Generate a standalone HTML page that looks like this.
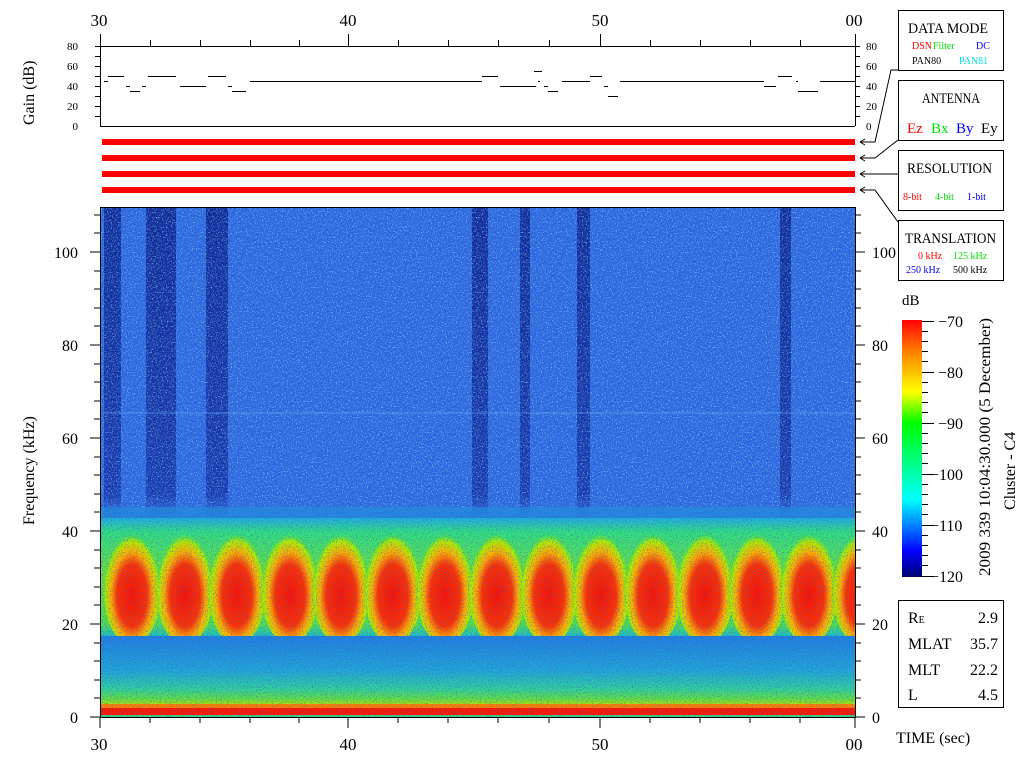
<!DOCTYPE html>
<html><head><meta charset="utf-8"><style>
html,body{margin:0;padding:0;background:#fff;}
svg{display:block;}
text{font-family:"Liberation Serif",serif;}
.m{font-family:"Liberation Mono",monospace;}
</style></head><body>
<svg width="1024" height="768" viewBox="0 0 1024 768" xmlns="http://www.w3.org/2000/svg">
<defs>
<radialGradient id="blob" cx="50%" cy="60%" r="50%">
<stop offset="0" stop-color="#ff1000"/>
<stop offset="0.5" stop-color="#ff3000"/>
<stop offset="0.7" stop-color="#ffb000"/>
<stop offset="0.88" stop-color="#b0f000"/>
<stop offset="1" stop-color="#40e040" stop-opacity="0"/>
</radialGradient>
<linearGradient id="band" x1="0" y1="0" x2="0" y2="1">
<stop offset="0" stop-color="#20b0e0"/>
<stop offset="0.12" stop-color="#30e080"/>
<stop offset="0.5" stop-color="#70e040"/>
<stop offset="0.9" stop-color="#50e050"/>
<stop offset="1" stop-color="#20c0c0"/>
</linearGradient>
<linearGradient id="low" x1="0" y1="0" x2="0" y2="1">
<stop offset="0" stop-color="#2080e0"/>
<stop offset="0.5" stop-color="#20a8d8"/>
<stop offset="0.75" stop-color="#30d0a0"/>
<stop offset="0.9" stop-color="#60e040"/>
<stop offset="1" stop-color="#c0e000"/>
</linearGradient>
<linearGradient id="stripe" x1="0" y1="0" x2="0" y2="1">
<stop offset="0" stop-color="#102898"/>
<stop offset="0.9" stop-color="#1838b0"/>
<stop offset="1" stop-color="#2858d0" stop-opacity="0"/>
</linearGradient>
<linearGradient id="cbar" x1="0" y1="1" x2="0" y2="0">
<stop offset="0" stop-color="#000070"/>
<stop offset="0.1" stop-color="#0000ff"/>
<stop offset="0.3" stop-color="#00ffff"/>
<stop offset="0.45" stop-color="#00ff80"/>
<stop offset="0.6" stop-color="#00ff00"/>
<stop offset="0.72" stop-color="#ffff00"/>
<stop offset="0.86" stop-color="#ff9000"/>
<stop offset="1" stop-color="#ff0000"/>
</linearGradient>
<filter id="noiseD" x="0" y="0" width="100%" height="100%">
<feTurbulence type="fractalNoise" baseFrequency="0.8" numOctaves="1" seed="3"/>
<feColorMatrix type="matrix" values="0 0 0 0 0.05  0 0 0 0 0.1  0 0 0 0 0.5  4 0 0 0 -2.0"/>
</filter>
<filter id="noiseL" x="0" y="0" width="100%" height="100%">
<feTurbulence type="fractalNoise" baseFrequency="0.8" numOctaves="1" seed="9"/>
<feColorMatrix type="matrix" values="0 0 0 0 0.2  0 0 0 0 0.8  0 0 0 0 1  0 4 0 0 -2.1"/>
</filter>
<clipPath id="plot"><rect x="101" y="208" width="754" height="509"/></clipPath>
</defs>

<g font-size="17" text-anchor="middle">
<text x="99" y="26">30</text><text x="348" y="26">40</text><text x="600" y="26">50</text><text x="854" y="26">00</text>
<text x="99" y="750">30</text><text x="348" y="750">40</text><text x="600" y="750">50</text><text x="854" y="750">00</text>
</g>

<g stroke="#000" stroke-width="1" fill="none">
<line x1="100" y1="46.5" x2="855" y2="46.5"/>
<line x1="100.5" y1="34" x2="100.5" y2="126"/>
<line x1="855.5" y1="34" x2="855.5" y2="126"/>
<line x1="100" y1="126.5" x2="855" y2="126.5"/>
<path d="M150.5 40V46M200.5 40V46M250.5 40V46M299.5 40V46M348.5 34V46M398.5 40V46M448.5 40V46M498.5 40V46M549.5 40V46M600.5 34V46M650.5 40V46M700.5 40V46M750.5 40V46M800.5 40V46"/>
<path d="M95 46.5H100M95 56.5H100M95 66.5H100M95 76.5H100M95 86.5H100M95 96.5H100M95 106.5H100M95 116.5H100"/>
<path d="M855 46.5H860M855 56.5H860M855 66.5H860M855 76.5H860M855 86.5H860M855 96.5H860M855 106.5H860M855 116.5H860"/>
<path d="M104 81.5H108M108 76.5H124M126 86.5H130M130 91.5H140M142 86.5H146M148 76.5H176M180 86.5H206M208 76.5H226M228 86.5H232M232 91.5H246M250 81.5H482M482 76.5H498M500 86.5H536M538 81.5H540M534 71.5H542M544 86.5H548M548 91.5H558M562 81.5H590M590 76.5H602M604 86.5H608M608 96.5H618M620 81.5H764M764 86.5H776M778 76.5H792M796 81.5H798M798 91.5H818M820 81.5H855"/>
</g>
<g font-size="11" class="m" fill="#000">
<text x="78" y="50" text-anchor="end">80</text><text x="78" y="70" text-anchor="end">60</text><text x="78" y="90" text-anchor="end">40</text><text x="78" y="110" text-anchor="end">20</text><text x="78" y="130" text-anchor="end">0</text>
<text x="866" y="50">80</text><text x="866" y="70">60</text><text x="866" y="90">40</text><text x="866" y="110">20</text><text x="866" y="130">0</text>
</g>
<text x="0" y="0" font-size="16" transform="translate(34,125) rotate(-90)">Gain (dB)</text>

<g fill="#ff0000">
<rect x="102" y="139" width="753" height="6"/>
<rect x="102" y="155" width="753" height="6"/>
<rect x="102" y="171" width="753" height="6"/>
<rect x="102" y="187" width="753" height="6"/>
</g>

<g stroke="#000" fill="none">
<path d="M898 70H891L875 142H860M860 142L865 139M860 142L865 145"/>
<path d="M898 140L875 158H860M860 158L865 155M860 158L865 161"/>
<path d="M898 174H860M860 174L865 171M860 174L865 177"/>
<path d="M898 222L875 190H860M860 190L865 187M860 190L865 193"/>
</g>

<g fill="#fff" stroke="#000">
<rect x="898.5" y="10.5" width="105" height="60"/>
<rect x="898.5" y="80.5" width="105" height="60"/>
<rect x="898.5" y="150.5" width="105" height="60"/>
<rect x="898.5" y="220.5" width="105" height="60"/>
</g>
<g font-size="15">
<text x="908" y="33" textLength="80" lengthAdjust="spacingAndGlyphs">DATA MODE</text>
<text x="922" y="103" textLength="58" lengthAdjust="spacingAndGlyphs">ANTENNA</text>
<text x="907" y="173" textLength="85" lengthAdjust="spacingAndGlyphs">RESOLUTION</text>
<text x="905" y="243" textLength="91" lengthAdjust="spacingAndGlyphs">TRANSLATION</text>
</g>
<g font-size="10" class="m">
<text x="912" y="49" fill="#ff0000">DSN</text><text x="933" y="49" fill="#00e000">Filter</text><text x="976" y="49" fill="#0000ff">DC</text>
<text x="912" y="64" fill="#000">PAN80</text><text x="959" y="64" fill="#00e0e0">PAN81</text>
<text x="903" y="200" fill="#ff0000">8-bit</text><text x="935" y="200" fill="#00e000">4-bit</text><text x="967" y="200" fill="#0000ff">1-bit</text>
<text x="918" y="259" fill="#ff0000">0 kHz</text><text x="953" y="259" fill="#00e000">125 kHz</text>
<text x="906" y="273" fill="#0000ff">250 kHz</text><text x="953" y="273" fill="#000">500 kHz</text>
</g>
<g font-size="15">
<text x="907" y="133" fill="#ff0000">Ez</text><text x="931" y="133" fill="#00e000">Bx</text><text x="956" y="133" fill="#0000ff">By</text><text x="981" y="133" fill="#000">Ey</text>
</g>

<g clip-path="url(#plot)">
<rect x="100" y="207" width="756" height="512" fill="#2d68e2"/>
<g fill="url(#stripe)">
<rect x="104" y="207" width="17" height="318"/>
<rect x="146" y="207" width="30" height="318"/>
<rect x="206" y="207" width="22" height="318"/>
<rect x="472" y="207" width="16" height="320"/>
<rect x="520" y="207" width="10" height="318"/>
<rect x="577" y="207" width="13" height="320"/>
<rect x="780" y="207" width="11" height="318"/>
</g>
<line x1="100" y1="413" x2="856" y2="413" stroke="#60b0f0" stroke-width="1" opacity="0.6"/>
<rect x="100" y="507" width="756" height="20" fill="#20a0e0" opacity="0.6"/>
<rect x="100" y="518" width="756" height="118" fill="url(#band)"/>
<g fill="url(#blob)">
<ellipse cx="132" cy="583" rx="30" ry="62"/>
<ellipse cx="185" cy="583" rx="30" ry="62"/>
<ellipse cx="237" cy="583" rx="30" ry="62"/>
<ellipse cx="290" cy="583" rx="30" ry="62"/>
<ellipse cx="341" cy="583" rx="30" ry="62"/>
<ellipse cx="393" cy="583" rx="30" ry="62"/>
<ellipse cx="445" cy="583" rx="30" ry="62"/>
<ellipse cx="497" cy="583" rx="30" ry="62"/>
<ellipse cx="549" cy="583" rx="30" ry="62"/>
<ellipse cx="601" cy="583" rx="30" ry="62"/>
<ellipse cx="653" cy="583" rx="30" ry="62"/>
<ellipse cx="705" cy="583" rx="30" ry="62"/>
<ellipse cx="757" cy="583" rx="30" ry="62"/>
<ellipse cx="809" cy="583" rx="30" ry="62"/>
<ellipse cx="861" cy="583" rx="30" ry="62"/>
</g>
<rect x="100" y="636" width="756" height="70" fill="url(#low)"/>
<rect x="100" y="704" width="756" height="5" fill="#ff8000"/>
<rect x="100" y="708" width="756" height="8" fill="#ff1800"/>
<rect x="100" y="715" width="756" height="3" fill="#40d080"/>
<rect x="100" y="207" width="756" height="300" filter="url(#noiseL)" opacity="0.8"/>
<rect x="100" y="207" width="756" height="512" filter="url(#noiseD)" opacity="0.6"/>
</g>
<rect x="100.5" y="207.5" width="755" height="510" fill="none" stroke="#000"/>

<g stroke="#000" fill="none">
<path d="M90 717H100M94 698H100M94 680H100M94 661H100M94 643H100M90 624H100M94 605H100M94 587H100M94 568H100M94 550H100M90 531H100M94 512H100M94 494H100M94 475H100M94 457H100M90 438H100M94 419H100M94 401H100M94 382H100M94 364H100M90 345H100M94 326H100M94 308H100M94 289H100M94 271H100M90 252H100M94 233H100M94 215H100"/>
<path d="M855 717H865M855 698H861M855 680H861M855 661H861M855 643H861M855 624H865M855 605H861M855 587H861M855 568H861M855 550H861M855 531H865M855 512H861M855 494H861M855 475H861M855 457H861M855 438H865M855 419H861M855 401H861M855 382H861M855 364H861M855 345H865M855 326H861M855 308H861M855 289H861M855 271H861M855 252H865M855 233H861M855 215H861"/>
<path d="M100 717V728M150 717V723M200 717V723M250 717V723M299 717V723M348 717V728M398 717V723M448 717V723M498 717V723M549 717V723M600 717V728M650 717V723M700 717V723M750 717V723M800 717V723M855 717V728"/>
</g>
<g font-size="16" fill="#000">
<g text-anchor="end">
<text x="78" y="723">0</text><text x="78" y="630">20</text><text x="78" y="537">40</text><text x="78" y="444">60</text><text x="78" y="351">80</text><text x="78" y="258">100</text>
</g>
<text x="872" y="723">0</text><text x="872" y="630">20</text><text x="872" y="537">40</text><text x="872" y="444">60</text><text x="872" y="351">80</text><text x="872" y="258">100</text>
</g>
<text font-size="16" transform="translate(34,525) rotate(-90)">Frequency (kHz)</text>

<text x="902" y="305" font-size="15">dB</text>
<rect x="902" y="320" width="20" height="257" fill="url(#cbar)"/>
<g stroke="#000">
<path d="M922 321.5H934M922 331.5H928M922 341.5H928M922 351.5H928M922 361.5H928M922 372.5H934M922 382.5H928M922 392.5H928M922 402.5H928M922 412.5H928M922 423.5H934M922 433.5H928M922 443.5H928M922 453.5H928M922 463.5H928M922 474.5H934M922 484.5H928M922 494.5H928M922 504.5H928M922 514.5H928M922 525.5H934M922 535.5H928M922 545.5H928M922 555.5H928M922 565.5H928M922 576.5H934"/>
</g>
<g font-size="16">
<text x="938" y="327">−70</text><text x="938" y="378">−80</text><text x="938" y="429">−90</text><text x="930" y="480">−100</text><text x="930" y="531">−110</text><text x="930" y="582">−120</text>
</g>
<g font-size="16">
<text x="0" y="0" transform="translate(990,576) rotate(-90)" textLength="258" lengthAdjust="spacingAndGlyphs">2009 339 10:04:30.000 (5 December)</text>
<text x="0" y="0" transform="translate(1015,510) rotate(-90)">Cluster - C4</text>
</g>

<rect x="898.5" y="600.5" width="105" height="107" fill="#fff" stroke="#000"/>
<g font-size="16">
<text x="908" y="623">R<tspan font-size="10">E</tspan></text><text x="998" y="623" text-anchor="end">2.9</text>
<text x="908" y="649">MLAT</text><text x="998" y="649" text-anchor="end">35.7</text>
<text x="908" y="675">MLT</text><text x="998" y="675" text-anchor="end">22.2</text>
<text x="908" y="700">L</text><text x="998" y="700" text-anchor="end">4.5</text>
<text x="896" y="743">TIME (sec)</text>
</g>
</svg>
</body></html>
